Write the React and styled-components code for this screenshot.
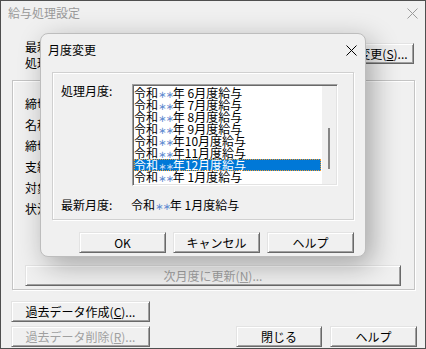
import React from "react";
import styled, { createGlobalStyle } from "styled-components";

const GlobalStyle = createGlobalStyle`
  html, body {
    margin: 0;
    padding: 0;
    background: #f0f0f0;
  }
  body {
    font-family: "Noto Sans CJK JP", "Noto Sans", sans-serif;
    font-size: 12px;
    color: #000;
  }
`;

const months = [
  { label: " 6月度給与" },
  { label: " 7月度給与" },
  { label: " 8月度給与" },
  { label: " 9月度給与" },
  { label: "10月度給与" },
  { label: "11月度給与" },
  { label: "12月度給与", selected: true },
  { label: " 1月度給与" },
];

const groupLabels = ["締切年月:", "名称:", "締切日:", "支給日:", "対象期間:", "状況:"];

const CloseIcon = ({ color }) => (
  <svg width="11" height="11" viewBox="0 0 11 11">
    <path d="M0.5 0.5 L10.5 10.5 M10.5 0.5 L0.5 10.5" stroke={color} strokeWidth="1" fill="none" />
  </svg>
);

const PeriodName = ({ text, light }) => (
  <>
    令和<Mask $light={light}>∗∗</Mask>年{text}
  </>
);

const App = () => {
  return (
    <>
      <GlobalStyle />
      <Window>
        <TitleBar>
          <TitleText $inactive>給与処理設定</TitleText>
          <CloseBox>
            <CloseIcon color="#9a9a9a" />
          </CloseBox>
        </TitleBar>

        <TopRow>
          <InfoBlock>
            <InfoLine>最新月度:</InfoLine>
            <InfoLine>処理月度:</InfoLine>
          </InfoBlock>
          <Button $w={86} $top={4}>
            月度変更(<u>S</u>)...
          </Button>
        </TopRow>

        <GroupBox>
          <LabelList>
            {groupLabels.map((l) => (
              <FieldLabel key={l}>{l}</FieldLabel>
            ))}
          </LabelList>
          <WideButton disabled>
            次月度に更新(<u>N</u>)...
          </WideButton>
        </GroupBox>

        <BottomArea>
          <Button $w={139}>
            過去データ作成(<u>C</u>)...
          </Button>
          <BottomRow>
            <Button $w={139} disabled>
              過去データ削除(<u>R</u>)...
            </Button>
            <RightButtons>
              <Button $w={86}>閉じる</Button>
              <Button $w={87}>ヘルプ</Button>
            </RightButtons>
          </BottomRow>
        </BottomArea>

        <Dialog>
          <TitleBar $h={32}>
            <TitleText>月度変更</TitleText>
            <CloseBox $right={8}>
              <CloseIcon color="#000" />
            </CloseBox>
          </TitleBar>
          <InnerGroup>
            <FormRow>
              <FormLabel>処理月度:</FormLabel>
              <ListBox>
                <Rows>
                  {months.map((m) => (
                    <Row key={m.label} $selected={m.selected}>
                      <PeriodName text={m.label} light={m.selected} />
                    </Row>
                  ))}
                </Rows>
                <ScrollTrack>
                  <Thumb />
                </ScrollTrack>
              </ListBox>
            </FormRow>
            <FormRow $top={12}>
              <FormLabel $w={70}>最新月度:</FormLabel>
              <ValueText>
                <PeriodName text=" 1月度給与" />
              </ValueText>
            </FormRow>
          </InnerGroup>
          <DialogButtons>
            <Button $w={87}>OK</Button>
            <Button $w={87}>キャンセル</Button>
            <Button $w={87}>ヘルプ</Button>
          </DialogButtons>
        </Dialog>
      </Window>
    </>
  );
};

export default App;

const Window = styled.div`
  position: relative;
  box-sizing: border-box;
  width: 426px;
  height: 349px;
  border: 1px solid #4f4f4f;
  background: #f0f0f0;
  display: flex;
  flex-direction: column;
  overflow: hidden;
`;

const TitleBar = styled.div`
  height: ${(p) => p.$h || 24}px;
  display: flex;
  align-items: center;
  justify-content: space-between;
  padding-left: 7px;
  flex-shrink: 0;
`;

const TitleText = styled.span`
  font-size: 12px;
  line-height: 12px;
  color: ${(p) => (p.$inactive ? "#999999" : "#000")};
`;

const CloseBox = styled.span`
  display: flex;
  margin-right: ${(p) => (p.$right !== undefined ? p.$right : 7)}px;
`;

const TopRow = styled.div`
  display: flex;
  justify-content: space-between;
  align-items: flex-start;
  margin-top: 14px;
  padding: 0 11px 0 24px;
  height: 32px;
`;

const InfoBlock = styled.div`
  display: flex;
  flex-direction: column;
`;

const InfoLine = styled.div`
  line-height: 16px;
`;

const Button = styled.button`
  box-sizing: border-box;
  width: ${(p) => p.$w}px;
  height: 21px;
  margin-top: ${(p) => p.$top || 0}px;
  padding: 0;
  font-family: inherit;
  font-size: 12px;
  line-height: 12px;
  color: ${(p) => (p.disabled ? "#a0a0a0" : "#000")};
  background: #f0f0f0;
  border: 1px solid;
  border-color: #e3e3e3 #696969 #696969 #e3e3e3;
  box-shadow: inset 1px 1px #ffffff, inset -1px -1px #a0a0a0;
  u {
    text-decoration: underline;
  }
`;

const WideButton = styled(Button)`
  width: auto;
  align-self: stretch;
  height: 21px;
`;

const GroupBox = styled.div`
  box-sizing: border-box;
  margin: 9px 10px 0 11px;
  height: 210px;
  border: 1px solid #c4c4c4;
  box-shadow: inset 1px 1px #ffffff, 1px 1px #ffffff;
  display: flex;
  flex-direction: column;
  padding: 12px 13px 0 12px;
`;

const LabelList = styled.div`
  display: flex;
  flex-direction: column;
  margin-bottom: 46px;
`;

const FieldLabel = styled.div`
  line-height: 21px;
`;

const BottomArea = styled.div`
  display: flex;
  flex-direction: column;
  gap: 4px;
  margin: 11px 8px 0 10px;
`;

const BottomRow = styled.div`
  display: flex;
  justify-content: space-between;
`;

const RightButtons = styled.div`
  display: flex;
  gap: 8px;
`;

const Dialog = styled.div`
  position: absolute;
  left: 39px;
  top: 32px;
  box-sizing: border-box;
  width: 326px;
  height: 224px;
  border: 1px solid #bdbdbd;
  border-radius: 8px;
  background: #f0f0f0;
  box-shadow: 6px 8px 28px rgba(0, 0, 0, 0.32);
  display: flex;
  flex-direction: column;
`;

const InnerGroup = styled.div`
  box-sizing: border-box;
  margin: 6px 11px 0 11px;
  height: 148px;
  border: 1px solid #d0d0d0;
  box-shadow: inset 1px 1px #ffffff, 1px 1px #ffffff;
  padding: 11px 0 0 8px;
  display: flex;
  flex-direction: column;
`;

const FormRow = styled.div`
  display: flex;
  align-items: flex-start;
  margin-top: ${(p) => p.$top || 0}px;
`;

const FormLabel = styled.div`
  width: ${(p) => p.$w || 71}px;
  line-height: 12px;
  padding-top: 1px;
`;

const ValueText = styled.div`
  line-height: 12px;
  padding-top: 1px;
  white-space: pre;
`;

const ListBox = styled.div`
  box-sizing: border-box;
  width: 206px;
  height: 102px;
  border: 1px solid;
  border-color: #a0a0a0 #ffffff #ffffff #a0a0a0;
  box-shadow: inset 1px 1px #696969, inset -1px -1px #e3e3e3;
  background: #fff;
  padding: 1px;
  display: flex;
  overflow: hidden;
`;

const Rows = styled.div`
  flex: 1;
  display: flex;
  flex-direction: column;
  padding-top: 1px;
`;

const Row = styled.div`
  height: 12px;
  line-height: 12px;
  white-space: pre;
  margin-right: 1px;
  background: ${(p) => (p.$selected ? "#0078d7" : "transparent")};
  color: ${(p) => (p.$selected ? "#fff" : "#000")};
  outline: ${(p) => (p.$selected ? "1px dotted #f39a2a" : "none")};
  outline-offset: -1px;
  flex-shrink: 0;
`;

const Mask = styled.span`
  font-family: "DejaVu Sans", sans-serif;
  font-size: 10px;
  letter-spacing: -1px;
  color: ${(p) => (p.$light ? "#c9dcf5" : "#5f8ad0")};
`;

const ScrollTrack = styled.div`
  width: 14px;
  background: #f0f0f0;
  display: flex;
  justify-content: center;
  padding-top: 42px;
  box-sizing: border-box;
`;

const Thumb = styled.div`
  width: 2px;
  height: 41px;
  background: #858585;
`;

const DialogButtons = styled.div`
  display: flex;
  justify-content: flex-end;
  gap: 7px;
  padding-right: 11px;
  margin-top: 12px;
`;
